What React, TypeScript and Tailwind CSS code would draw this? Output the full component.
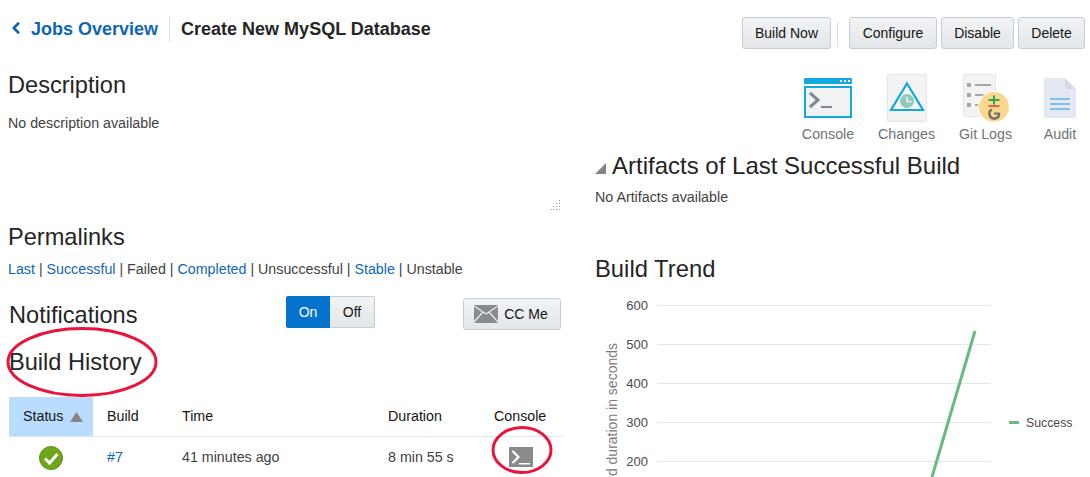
import { ChevronLeft } from "lucide-react";

const btn =
  "h-[32px] rounded-[3px] border border-[#c4ced7] bg-gradient-to-b from-[#f1f3f5] to-[#e3e7ea] text-[14px] text-[#161513] flex items-center justify-center";
const heading = "text-[23.6px] leading-[28px] text-[#252525]";
const link = "text-[#0f66b3]";
const toolLabel = "mt-[3px] text-[14.250px] leading-[18px] text-[#6f7378]";

function ConsoleIcon() {
  return (
    <svg width="48" height="40" viewBox="0 0 48 40">
      <rect x="0" y="0" width="48" height="6" rx="1" fill="#12a9e1" />
      <rect x="36" y="2" width="2" height="2" fill="#fff" />
      <rect x="40" y="2" width="2" height="2" fill="#fff" />
      <rect x="44" y="2" width="2" height="2" fill="#fff" />
      <rect x="1" y="9" width="46" height="30" fill="#f2f2f2" stroke="#12a9e1" strokeWidth="2" />
      <path d="M6 15l8 7-8 7" fill="none" stroke="#808a94" strokeWidth="3" />
      <rect x="17" y="28" width="11" height="2" fill="#808a94" />
    </svg>
  );
}

function ChangesIcon() {
  return (
    <svg width="40" height="48" viewBox="0 0 40 48">
      <rect x="0.5" y="0.5" width="39" height="47" rx="1" fill="#f3f3f3" stroke="#e6e6e6" />
      <path d="M20 9.500L36 36H4Z" fill="#f6f6f6" stroke="#12a9e1" strokeWidth="2.200" />
      <circle cx="20" cy="27" r="7" fill="#8ccab9" />
      <path d="M20 22.5V27.5H24.5" fill="none" stroke="#f3f3f3" strokeWidth="1.5" />
    </svg>
  );
}

function GitLogsIcon() {
  return (
    <svg width="47" height="48" viewBox="0 0 47 48">
      <rect x="0.5" y="0.5" width="32" height="42" rx="1" fill="#f3f3f3" stroke="#e6e6e6" />
      <rect x="4" y="9" width="4" height="4" fill="#a3a8ad" />
      <rect x="12" y="10" width="16" height="2" fill="#a3a8ad" />
      <rect x="4" y="19" width="4" height="4" fill="#a3a8ad" />
      <rect x="12" y="20" width="10" height="2" fill="#a3a8ad" />
      <rect x="4" y="29" width="4" height="4" fill="#a3a8ad" />
      <rect x="12" y="30" width="4" height="2" fill="#a3a8ad" />
      <circle cx="31" cy="33" r="16" fill="#fff" />
      <circle cx="31" cy="33" r="15" fill="#fbd98c" />
      <rect x="25.500" y="25" width="11" height="2" fill="#2fa45f" />
      <rect x="30" y="21.500" width="2" height="9" fill="#2fa45f" />
      <rect x="25.500" y="31" width="11" height="2" fill="#e5604c" />
      <path d="M29 35.500a4.800 4.800 0 1 0 7 4" fill="none" stroke="#6f6f6f" strokeWidth="2.400" />
      <path d="M31 39.500h6" fill="none" stroke="#6f6f6f" strokeWidth="2" />
    </svg>
  );
}

function AuditIcon() {
  return (
    <svg width="32" height="40" viewBox="0 0 32 40">
      <path d="M1.500 0.500H21L31.500 11V38.500a1 1 0 0 1-1 1H1.500a1 1 0 0 1-1-1V1.500a1 1 0 0 1 1-1Z" fill="#e4eaf3" stroke="#dfe5ee" />
      <path d="M21 0.500V11H31.500Z" fill="#d3dae3" />
      <rect x="6" y="20" width="20" height="2" fill="#85bdec" />
      <rect x="6" y="25" width="20" height="2" fill="#85bdec" />
      <rect x="6" y="30" width="20" height="2" fill="#85bdec" />
    </svg>
  );
}

function TerminalGlyph() {
  return (
    <svg width="24" height="20" viewBox="0 0 24 20">
      <rect width="24" height="20" fill="#878b8e" />
      <path d="M3.500 4l6 6-6 6" fill="none" stroke="#fff" strokeWidth="2.200" />
      <rect x="10" y="16" width="11" height="1.500" fill="#fff" />
    </svg>
  );
}

function CheckIcon() {
  return (
    <svg width="24" height="24" viewBox="0 0 24 24">
      <circle cx="12" cy="12" r="11.500" fill="#6fa518" stroke="#5d9412" />
      <path d="M6 12.500l4.500 4.500L18.500 8" fill="none" stroke="#fff" strokeWidth="3" />
    </svg>
  );
}

function TrendChart() {
  const ticks = [
    { label: "600", y: 18 },
    { label: "500", y: 57 },
    { label: "400", y: 96 },
    { label: "300", y: 135 },
    { label: "200", y: 174 },
  ];
  return (
    <svg width="495" height="190" viewBox="0 0 495 190" className="block">
      {ticks.map((t) => (
        <g key={t.label}>
          <line x1="62" x2="396" y1={t.y + 0.5} y2={t.y + 0.5} stroke="#e6e6ee" />
          <text x="53" y={t.y + 5} textAnchor="end" fontSize="13" fill="#4a4a4a">
            {t.label}
          </text>
        </g>
      ))}
      <text
        transform="translate(22 0) rotate(-90)"
        x="-56"
        textAnchor="end"
        fontSize="14"
        fill="#7b7b7b"
      >
        Build duration in seconds
      </text>
      <line x1="380" y1="44" x2="337" y2="190" stroke="#66bb7f" strokeWidth="3" />
      <rect x="414" y="134" width="10" height="3" fill="#66bb7f" />
      <text x="431" y="140" fontSize="12.300" fill="#4a4a4a">
        Success
      </text>
    </svg>
  );
}

export default function App() {
  return (
    <div className="relative h-[477px] w-[1090px] overflow-hidden bg-white font-['Liberation_Sans',Arial,sans-serif] text-[14.250px] text-[#3f3f3f]">
      {/* top bar */}
      <div className="flex h-[74px] items-start pl-[8px] pr-[5px] pt-[17px]">
        <ChevronLeft size={18} strokeWidth={3.500} className="mt-[2px] -ml-[1px] text-[#0f66b3]" />
        <a className="ml-[6px] text-[18px] font-bold leading-[25px] text-[#0f66b3]">Jobs Overview</a>
        <div className="ml-[11px] h-[25px] w-px bg-[#d6dfe6]" />
        <h1 className="ml-[11px] text-[18px] font-bold leading-[25px] text-[#252525]">
          Create New MySQL Database
        </h1>
        <div className="ml-auto flex items-start">
          <button className={`${btn} w-[89px]`}>Build Now</button>
          <div className="mx-[6px] mt-[5px] h-[25px] w-px bg-[#d6dfe6]" />
          <button className={`${btn} ml-[5px] w-[88px]`}>Configure</button>
          <button className={`${btn} ml-[4px] w-[73px]`}>Disable</button>
          <button className={`${btn} ml-[4px] w-[67px]`}>Delete</button>
        </div>
      </div>

      <div className="flex">
        {/* left column */}
        <div className="relative ml-[8px] h-[403px] w-[554px] shrink-0">
          <h2 className={`${heading} -mt-[3px]`}>Description</h2>
          <p className="mt-[15px] leading-[18px]">No description available</p>
          <svg width="10" height="10" viewBox="0 0 10 10" className="absolute left-[543px] top-[126px]">
            <g fill="#9a9a9a">
              <rect x="8" y="0" width="1" height="1" />
              <rect x="5" y="3" width="1" height="1" />
              <rect x="8" y="3" width="1" height="1" />
              <rect x="2" y="6" width="1" height="1" />
              <rect x="5" y="6" width="1" height="1" />
              <rect x="8" y="6" width="1" height="1" />
              <rect x="0" y="9" width="1" height="1" />
              <rect x="2" y="9" width="1" height="1" />
              <rect x="5" y="9" width="1" height="1" />
              <rect x="8" y="9" width="1" height="1" />
            </g>
          </svg>

          <h2 className={`${heading} mt-[91px]`}>Permalinks</h2>
          <p className="mt-[9px] leading-[18px]">
            <a className={link}>Last</a> | <a className={link}>Successful</a> | Failed |{" "}
            <a className={link}>Completed</a> | Unsuccessful | <a className={link}>Stable</a> | Unstable
          </p>

          <div className="mt-[18px] flex h-[36px] items-start">
            <h2 className={`${heading} ml-[1px] mt-[5px] w-[277px]`}>Notifications</h2>
            <div className="flex h-[32px] w-[89px] overflow-hidden rounded-[2px] text-[14px]">
              <div className="flex w-[44px] items-center justify-center bg-[#0572ce] text-white">On</div>
              <div className="flex flex-1 items-center justify-center border border-l-0 border-[#c4ced7] bg-gradient-to-b from-[#f1f3f5] to-[#e3e7ea] text-[#161513]">
                Off
              </div>
            </div>
            <button className={`${btn} ml-[88px] mt-[2px] w-[98px] gap-[6px] pr-[2px]`}>
              <svg width="24" height="18" viewBox="0 0 24 18">
                <rect width="24" height="18" rx="1" fill="#878b8e" />
                <path d="M0 1l12 8 12-8M0 17l9-10M24 17l-9-10" fill="none" stroke="#eceeef" strokeWidth="1.200" />
              </svg>
              CC Me
            </button>
          </div>

          <h2 className={`${heading} ml-[1px] mt-[16px]`}>Build History</h2>

          <div className="mt-[21px] ml-[1px]">
            <div className="grid h-[40px] grid-cols-[84px_75px_206px_106px_1fr] items-center border-b border-[#dfe4e8] text-[#161513]">
              <div className="flex h-full items-center gap-[7px] bg-[#b9dcff] pl-[14px]">
                Status
                <svg width="13" height="10" viewBox="0 0 13 10">
                  <path d="M6.500 0L13 10H0Z" fill="#858585" />
                </svg>
              </div>
              <div className="pl-[14px]">Build</div>
              <div className="pl-[14px]">Time</div>
              <div className="pl-[14px]">Duration</div>
              <div className="pl-[14px]">Console</div>
            </div>
            <div className="grid h-[41px] grid-cols-[84px_75px_206px_106px_1fr] items-center">
              <div className="flex justify-center">
                <CheckIcon />
              </div>
              <a className={`${link} pl-[14px]`}>#7</a>
              <div className="pl-[14px]">41 minutes ago</div>
              <div className="pl-[14px]">8 min 55 s</div>
              <div className="-mt-[2px] pl-[29px]">
                <TerminalGlyph />
              </div>
            </div>
          </div>
        </div>

        {/* right column */}
        <div className="ml-[33px] flex-1">
          <div className="flex items-start">
            <div className="ml-[207px] flex w-[52px] flex-col items-center">
              <div className="flex h-[48px] items-center">
                <ConsoleIcon />
              </div>
              <span className={toolLabel}>Console</span>
            </div>
            <div className="ml-[24px] flex w-[57px] flex-col items-center">
              <div className="flex h-[48px] items-center">
                <ChangesIcon />
              </div>
              <span className={toolLabel}>Changes</span>
            </div>
            <div className="ml-[24px] flex w-[53px] flex-col items-center">
              <div className="ml-[2px] flex h-[48px] items-center">
                <GitLogsIcon />
              </div>
              <span className={`${toolLabel} whitespace-nowrap`}>Git Logs</span>
            </div>
            <div className="ml-[32px] flex w-[32px] flex-col items-center">
              <div className="flex h-[48px] items-center">
                <AuditIcon />
              </div>
              <span className={toolLabel}>Audit</span>
            </div>
          </div>

          <div className="mt-[9px] flex items-center gap-[6px]">
            <svg width="11" height="11" viewBox="0 0 11 11" className="mt-[4px]">
              <path d="M11 0V11H0Z" fill="#858585" />
            </svg>
            <h2 className="text-[24px] leading-[28px] text-[#252525]">Artifacts of Last Successful Build</h2>
          </div>
          <p className="mt-[8px] leading-[18px]">No Artifacts available</p>

          <h2 className="mt-[49px] text-[23.800px] leading-[28px] text-[#252525]">Build Trend</h2>
          <div className="mt-[4px]">
            <TrendChart />
          </div>
        </div>
      </div>

      {/* red annotations */}
      <svg width="1090" height="477" className="pointer-events-none absolute left-0 top-0">
        <ellipse cx="82" cy="362" rx="74" ry="33.500" fill="none" stroke="#e8143c" strokeWidth="3" />
        <ellipse cx="522" cy="450" rx="29" ry="22.500" fill="none" stroke="#e8143c" strokeWidth="3" />
      </svg>
    </div>
  );
}
